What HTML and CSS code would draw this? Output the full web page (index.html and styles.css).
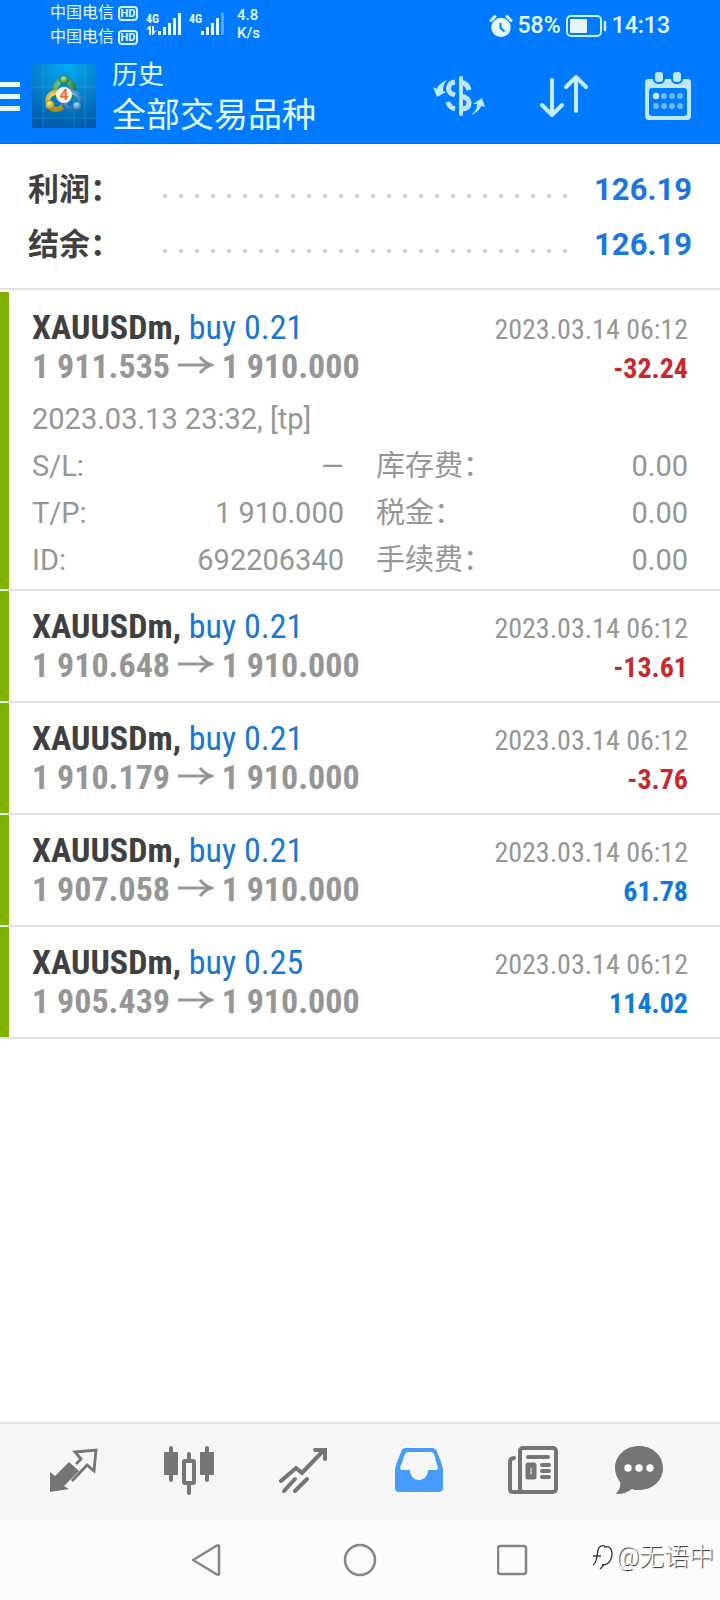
FILE: index.html
```html
<!DOCTYPE html>
<html lang="zh-CN">
<head>
<meta charset="utf-8">
<meta name="viewport" content="width=device-width, initial-scale=1">
<title>历史</title>
<link rel="stylesheet" href="styles.css">
</head>
<body>
<div class="app">
  <div class="status">
    <div class="carriers">
      <div class="carrier">中国电信 <span class="hd">HD</span></div>
      <div class="carrier">中国电信 <span class="hd">HD</span></div>
    </div>
    <svg class="signal" width="36" height="24" viewBox="0 0 36 24" aria-hidden="true">
      <text class="net" x="0" y="11">4G</text>
      <g fill="#e3fbff"><rect x="12" y="19" width="3" height="4"/><rect x="17" y="15" width="3" height="8"/><rect x="22" y="11" width="3" height="12"/><rect x="27" y="6" width="3" height="17"/><rect x="32" y="1" width="3" height="22"/><path d="M0 18l3-4h2v9h-2v-6zM6 14h2v5l3-1-4 5h-1z"/></g>
    </svg>
    <svg class="signal" width="36" height="24" viewBox="0 0 36 24" aria-hidden="true">
      <text class="net" x="0" y="11">4G</text>
      <g fill="#e3fbff"><rect x="12" y="19" width="3" height="4"/><rect x="17" y="15" width="3" height="8"/><rect x="22" y="11" width="3" height="12"/><rect x="27" y="6" width="3" height="17"/><rect x="32" y="1" width="3" height="22" opacity=".35"/></g>
    </svg>
    <div class="speed">4.8<br>K/s</div>
    <div class="status-right">
      <svg width="24" height="24" viewBox="0 0 24 24" aria-hidden="true"><circle cx="12" cy="13.500" r="9.700" fill="#e3fbff"/><path d="M2 6.500l4-4M22 6.500l-4-4" stroke="#e3fbff" stroke-width="3" stroke-linecap="round"/><path d="M11.500 9v5l4 3.500" stroke="#007aff" stroke-width="2" fill="none"/></svg>
      <span>58%</span>
      <svg width="41" height="22" viewBox="0 0 41 22" aria-hidden="true"><rect x="1" y="1" width="34" height="20" rx="4" fill="none" stroke="#c9f0ff" stroke-width="2"/><rect x="4" y="4" width="17" height="14" rx="1" fill="#e8f4ff"/><path d="M39 7v8" stroke="#c9f0ff" stroke-width="2.500" stroke-linecap="round"/></svg>
      <time>14:13</time>
    </div>
  </div>

  <header class="header">
    <button class="menu" aria-label="菜单"><i></i><i></i><i></i></button>
    <svg class="logo" width="64" height="64" viewBox="0 0 64 64" aria-hidden="true">
      <defs>
        <radialGradient id="sky" cx=".55" cy="0" r="1"><stop offset="0" stop-color="#00adf0"/><stop offset=".5" stop-color="#0784cf"/><stop offset="1" stop-color="#005cab"/></radialGradient>
        <radialGradient id="green" cx=".4" cy=".3" r=".7"><stop offset="0" stop-color="#b9e39a"/><stop offset="1" stop-color="#247a35"/></radialGradient>
        <radialGradient id="gold" cx=".4" cy=".3" r=".7"><stop offset="0" stop-color="#fff18a"/><stop offset="1" stop-color="#a98f14"/></radialGradient>
        <radialGradient id="blue" cx=".4" cy=".3" r=".7"><stop offset="0" stop-color="#a6ddff"/><stop offset="1" stop-color="#1c6fb5"/></radialGradient>
      </defs>
      <rect width="64" height="64" fill="url(#sky)"/>
      <path d="M0 23h64M0 54h64M11 0v64M53 0v64M42 0v64" stroke="#45bdeb" stroke-width=".6" opacity=".5"/>
      <circle cx="32" cy="26" r="9.500" fill="none" stroke="url(#green)" stroke-width="5"/>
      <circle cx="24" cy="37" r="8.500" fill="none" stroke="url(#gold)" stroke-width="5"/>
      <circle cx="40" cy="37" r="8.500" fill="none" stroke="url(#blue)" stroke-width="5"/>
      <circle cx="32" cy="16" r="4.500" fill="url(#green)" stroke="#23693a" stroke-width=".6"/>
      <circle cx="18" cy="41" r="4.500" fill="url(#gold)" stroke="#816f18" stroke-width=".6"/>
      <circle cx="45" cy="42" r="4.500" fill="url(#blue)" stroke="#195b8e" stroke-width=".6"/>
      <circle cx="32" cy="31" r="8" fill="#fff6ea"/>
      <text class="four" x="32" y="36" text-anchor="middle">4</text>
    </svg>
    <div class="titles">
      <div class="subtitle">历史</div>
      <h1 class="title">全部交易品种</h1>
    </div>
    <div class="tools">
      <button aria-label="货币"><svg class="currency" width="50" height="42" viewBox="0 0 50 42"><g fill="none" stroke="#bde7ff" stroke-width="4"><path d="M28 3v36" stroke-linecap="round"/><path d="M36 15c-1-5-4-7-8-8M22 7c-8 1-8 10-3 12l3 1M28 21c8 2 8 5 8 7 0 4-3 6-8 6M15 27c1 4 3 6 7 7" stroke-width="5"/></g><path d="M0 12l4 2c1-4 5-7 10-9-3 3-4 7-4 11l3 1-9 5zM38 40c5-4 6-7 6-11l-4 0 9-6 3 9-4-1c-1 4-5 7-10 9z" fill="#bde7ff"/></svg></button>
      <button aria-label="排序"><svg width="50" height="44" viewBox="0 0 50 44"><path d="M13 6v35M3 31l10 10 10-10M37 37V3M27 13L37 3l10 10" fill="none" stroke="#c5ecff" stroke-width="4" stroke-linecap="round" stroke-linejoin="round"/></svg></button>
      <button aria-label="日历"><svg width="46" height="48" viewBox="0 0 46 48"><path fill="#bde7ff" fill-rule="evenodd" d="M3 7h40a3 3 0 013 3v34a4 4 0 01-4 4H4a4 4 0 01-4-4V10a3 3 0 013-3zM7 16a3 3 0 00-3 3v22a3 3 0 003 3h32a3 3 0 003-3V19a3 3 0 00-3-3z"/><g fill="#bde7ff" stroke="#007aff" stroke-width="2"><rect x="9" y="-1" width="10" height="12" rx="4"/><rect x="27" y="-1" width="10" height="12" rx="4"/></g><g fill="#6fb9ff"><circle cx="11" cy="24" r="3.200" fill="#c8eeff"/><circle cx="19" cy="24" r="3"/><circle cx="27" cy="24" r="3"/><circle cx="35" cy="24" r="3"/><circle cx="11" cy="34" r="3"/><circle cx="19" cy="34" r="3"/><circle cx="27" cy="34" r="3"/><circle cx="35" cy="34" r="3"/></g></svg></button>
    </div>
  </header>

  <main class="main">
    <section class="summary">
      <div class="sum-row"><span class="sum-label">利润：</span><span class="dots"></span><b class="sum-value">126.19</b></div>
      <div class="sum-row"><span class="sum-label">结余：</span><span class="dots"></span><b class="sum-value">126.19</b></div>
    </section>

    <section class="deals">
      <article class="deal">
        <div class="line"><div class="symbol"><b>XAUUSDm,</b> <span class="side">buy 0.21</span></div><time class="date">2023.03.14 06:12</time></div>
        <div class="line"><div class="price">1 911.535 <svg class="arrow" width="36" height="22" viewBox="0 0 36 22"><path d="M0 9h33M22 1q5 6 11 8-6 2-11 8"/></svg> 1 910.000</div><b class="result loss">-32.24</b></div>
        <div class="details">
          <div class="opened">2023.03.13 23:32, [tp]</div>
          <div class="pair"><span>S/L:</span><span>—</span></div>
          <div class="pair"><span>库存费：</span><span>0.00</span></div>
          <div class="pair"><span>T/P:</span><span>1 910.000</span></div>
          <div class="pair"><span>税金：</span><span>0.00</span></div>
          <div class="pair"><span>ID:</span><span>692206340</span></div>
          <div class="pair"><span>手续费：</span><span>0.00</span></div>
        </div>
      </article>
      <article class="deal">
        <div class="line"><div class="symbol"><b>XAUUSDm,</b> <span class="side">buy 0.21</span></div><time class="date">2023.03.14 06:12</time></div>
        <div class="line"><div class="price">1 910.648 <svg class="arrow" width="36" height="22" viewBox="0 0 36 22"><path d="M0 9h33M22 1q5 6 11 8-6 2-11 8"/></svg> 1 910.000</div><b class="result loss">-13.61</b></div>
      </article>
      <article class="deal">
        <div class="line"><div class="symbol"><b>XAUUSDm,</b> <span class="side">buy 0.21</span></div><time class="date">2023.03.14 06:12</time></div>
        <div class="line"><div class="price">1 910.179 <svg class="arrow" width="36" height="22" viewBox="0 0 36 22"><path d="M0 9h33M22 1q5 6 11 8-6 2-11 8"/></svg> 1 910.000</div><b class="result loss">-3.76</b></div>
      </article>
      <article class="deal">
        <div class="line"><div class="symbol"><b>XAUUSDm,</b> <span class="side">buy 0.21</span></div><time class="date">2023.03.14 06:12</time></div>
        <div class="line"><div class="price">1 907.058 <svg class="arrow" width="36" height="22" viewBox="0 0 36 22"><path d="M0 9h33M22 1q5 6 11 8-6 2-11 8"/></svg> 1 910.000</div><b class="result">61.78</b></div>
      </article>
      <article class="deal">
        <div class="line"><div class="symbol"><b>XAUUSDm,</b> <span class="side">buy 0.25</span></div><time class="date">2023.03.14 06:12</time></div>
        <div class="line"><div class="price">1 905.439 <svg class="arrow" width="36" height="22" viewBox="0 0 36 22"><path d="M0 9h33M22 1q5 6 11 8-6 2-11 8"/></svg> 1 910.000</div><b class="result">114.02</b></div>
      </article>
    </section>
  </main>

  <nav class="tabs">
    <button aria-label="行情"><svg width="50" height="52" viewBox="0 0 50 52"><path d="M1 27l5 4 14-14 10 9-15 15 5 3-19 3z" fill="#757575"/><path d="M27 19l5-5-6-7 21-2-2 21-7-6-15 16" fill="none" stroke="#757575" stroke-width="2.800"/></svg></button>
    <button aria-label="图表"><svg width="50" height="52" viewBox="0 0 50 52"><g stroke="#757575" stroke-width="4" stroke-linecap="round"><path d="M7 3v32M43 3v32M25 9v6M25 39v9"/></g><rect x="0" y="7" width="14" height="23" rx="1" fill="#757575"/><rect x="36" y="7" width="14" height="23" rx="1" fill="#757575"/><rect x="20" y="16" width="10" height="22" rx="1" fill="#f6f6f6" stroke="#757575" stroke-width="4"/></svg></button>
    <button aria-label="交易"><svg width="50" height="52" viewBox="0 0 50 52"><g fill="none" stroke="#757575" stroke-width="4" stroke-linecap="round"><path d="M2 36l15-13 6 5L43 7"/><path d="M36 5h10v9"/><path d="M5 46l11-12M16 46l12-12"/></g></svg></button>
    <button aria-label="历史"><svg width="50" height="52" viewBox="0 0 50 52"><path fill="#459cfb" fill-rule="evenodd" d="M12 3h26c3 0 4 1 5 4l4 10c1 3 2 5 2 9v17a4 4 0 01-4 4H5a4 4 0 01-4-4V26c0-4 1-6 2-9l4-10c1-3 2-4 5-4zM14 7q-2 0-3 2L6 23q0 2 2 2h8c0 6 4 10 9 10s9-4 9-10h8q2 0 2-2L40 9q-1-2-3-2z"/></svg></button>
    <button aria-label="新闻"><svg width="50" height="52" viewBox="0 0 50 52"><g fill="none" stroke="#757575" stroke-width="4" stroke-linecap="round"><rect x="12" y="3" width="36" height="44" rx="3"/><path d="M6 13q-4 0-4 4v27q0 3 3 3h10"/><path d="M20 12h20M34 20h7M34 26h7M34 32h7"/><rect x="20" y="20" width="6" height="12" stroke-width="5" stroke-linejoin="round"/></g></svg></button>
    <button aria-label="聊天"><svg width="50" height="52" viewBox="0 0 50 52"><path fill="#757575" d="M25 1c13 0 24 9 24 22s-11 22-24 22c-3 0-5 0-7-1-4 3-9 5-16 5 3-4 5-7 4-12C3 33 1 28 1 23 1 10 12 1 25 1z"/><g fill="#fff"><circle cx="14" cy="23" r="3.700"/><circle cx="25" cy="23" r="3.700"/><circle cx="36" cy="23" r="3.700"/></g></svg></button>
  </nav>

  <div class="sysnav">
    <button aria-label="返回"><svg width="32" height="34" viewBox="0 0 32 34"><path d="M2 17L26 2.500q2-1 2 1v27q0 2-2 1z" fill="none" stroke="#858585" stroke-width="2.500" stroke-linejoin="round"/></svg></button>
    <button aria-label="主屏幕"><svg width="34" height="34" viewBox="0 0 34 34"><circle cx="17" cy="17" r="15" fill="none" stroke="#858585" stroke-width="2.500"/></svg></button>
    <button aria-label="最近任务"><svg width="32" height="34" viewBox="0 0 32 34"><rect x="1" y="3" width="28" height="28" rx="2" fill="none" stroke="#858585" stroke-width="2.500"/></svg></button>
    <div class="watermark"><svg width="24" height="28" viewBox="0 0 24 28" aria-hidden="true"><path d="M2 22c4-2 4-10 5-15 1-4 4-5 7-4M2 13h8M13 4c8-2 9 6 7 12-2 5-5 6-9 6M9 26l4-4" fill="none" stroke="#333" stroke-width="1.300"/></svg><span>@无语中</span></div>
  </div>
</div>
</body>
</html>
```
FILE: styles.css
```css
* { box-sizing: border-box; }
body {
  margin: 0;
  background: #fff;
  font-family: Roboto, "Noto Sans CJK SC", sans-serif;
  color: #404040;
}
button { border: 0; padding: 0; background: none; display: flex; align-items: center; justify-content: center; }
svg { display: block; }
.app { min-height: 100vh; display: flex; flex-direction: column; }

.status {
  display: flex;
  align-items: flex-start;
  padding: 1px 50px 0 50px;
  height: 50px;
  background: #007aff;
  color: #e3fbff;
}
.carriers { margin-right: 8px; }
.carrier { display: flex; align-items: center; gap: 4px; font-size: 16px; line-height: 24px; white-space: nowrap; }
.hd {
  border: 2px solid #d5f3ff;
  border-radius: 4px;
  width: 20px;
  font-size: 11px;
  font-weight: 700;
  line-height: 11px;
  text-align: center;
  display: flex;
  justify-content: center;
}
.signal { margin: 11px 7px 0 0; }
.net { font: 700 12px "Roboto Condensed", Roboto, sans-serif; fill: #e3fbff; }
.speed { margin: 5px 0 0 5px; font-size: 15px; font-weight: 500; line-height: 18px; }
.status-right { display: flex; align-items: center; gap: 5px; margin: 12px 0 0 auto; font-size: 23px; font-weight: 500; line-height: 26px; }

.header { display: flex; align-items: center; height: 94px; padding: 0 29px 1px 0; background: #007aff; border-bottom: 1px solid #0b6cd6; color: #e3fbff; }
.menu { flex-direction: column; gap: 7px; width: 20px; margin-right: 12px; }
.menu i { display: block; width: 20px; height: 5px; background: #e3fbff; }
.logo { flex: none; }
.four { font: 700 15px Roboto, sans-serif; fill: #ee7132; }
.titles { margin-left: 16px; }
.subtitle { font-size: 26px; line-height: 38px; }
.title { margin: 0; font-size: 34px; font-weight: 400; line-height: 42px; }
.tools { display: flex; align-items: center; gap: 56px; margin-left: auto; }
.currency { overflow: visible; }

.main { flex: 1; }
.summary { padding: 18px 28px 16px; border-bottom: 2px solid #e2e2e2; }
.sum-row { display: flex; align-items: center; font-size: 31px; line-height: 55px; }
.sum-label { width: 132px; font-weight: 700; }
.dots {
  flex: 1;
  height: 4px;
  margin: 12px 25px 0 3px;
  background: radial-gradient(circle at 2px 2px, #d6d6d6 2px, transparent 3px) 0 0 / 16px 4px;
}
.sum-value { color: #1a76e0; }

.deals { padding-top: 2px; }
.deal { padding: 16px 32px 0 23px; border-left: 9px solid #80b000; }
.deal::after { content: ""; display: block; margin: 16px -32px 0; border-bottom: 2px solid #e2e2e2; }
.line { display: flex; justify-content: space-between; align-items: baseline; height: 39px; line-height: 39px; font-family: "Roboto Condensed", Roboto, sans-serif; white-space: nowrap; }
.symbol, .price { font-size: 34px; }
.side { color: #1a76d2; }
.price { color: #969696; font-weight: 700; }
.arrow { display: inline-block; fill: none; stroke: #969696; stroke-width: 3; }
.date { font-size: 28px; color: #969696; }
.result { font-size: 28px; color: #0f78e0; }
.loss { color: #c8282c; }
.details { display: grid; grid-template-columns: 1fr 1fr; gap: 7px 32px; margin-top: 13px; margin-bottom: -7px; font-size: 29px; line-height: 40px; color: #969696; }
.opened { grid-column: 1 / -1; }
.pair { display: flex; justify-content: space-between; height: 40px; }

.tabs { display: grid; grid-template-columns: 115fr 115fr 115fr 115fr 114fr 98fr; height: 98px; padding: 0 32px 2px 16px; border-top: 2px solid #e0e0e0; background: #f6f6f6; }
.sysnav { position: relative; display: flex; justify-content: center; gap: 120px; height: 80px; background: #fcfcfc; }
.watermark { position: absolute; right: 6px; bottom: 24px; display: flex; align-items: center; gap: 1px; color: #fff; font-size: 25px; line-height: 38px; font-weight: 300; text-shadow: 1px 1px 1px #222; }
```
